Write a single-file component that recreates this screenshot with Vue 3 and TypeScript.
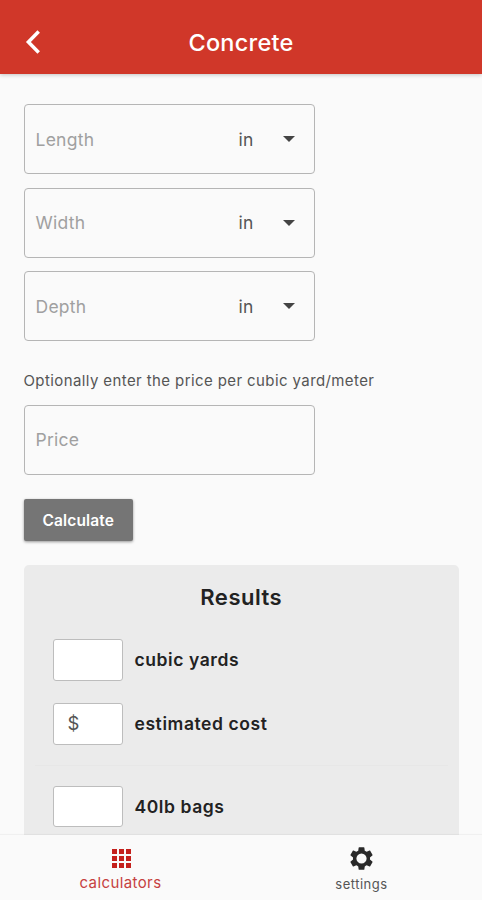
<script setup lang="ts">
import { ref } from 'vue'

interface Dimension {
  label: string
  unit: string
}

interface Result {
  prefix: string
  label: string
}

const dimensions = ref<Dimension[]>([
  { label: 'Length', unit: 'in' },
  { label: 'Width', unit: 'in' },
  { label: 'Depth', unit: 'in' },
])

const totals: Result[] = [
  { prefix: '', label: 'cubic yards' },
  { prefix: '$', label: 'estimated cost' },
]
const bags: Result[] = [{ prefix: '', label: '40lb bags' }]
const gridSteps = [0, 7, 14]
</script>

<template>
  <div class="screen">
    <header class="bar">
      <svg class="back" viewBox="0 0 16 24" aria-hidden="true">
        <path d="M13.7 1.6 3.4 12l10.3 10.4" />
      </svg>
      <h1 class="title">Concrete</h1>
    </header>

    <main class="content">
      <div class="fields">
        <div v-for="d in dimensions" :key="d.label" class="field">
          <span class="label">{{ d.label }}</span>
          <span class="unit">{{ d.unit }}</span>
          <svg class="caret" viewBox="0 0 12 6" aria-hidden="true"><path d="M0 0h12L6 6z" /></svg>
        </div>
      </div>

      <p class="hint">Optionally enter the price per cubic yard/meter</p>
      <div class="field"><span class="label">Price</span></div>

      <button class="calculate" type="button">Calculate</button>

      <section class="results">
        <h2 class="heading">Results</h2>
        <div class="group">
          <div v-for="r in totals" :key="r.label" class="row">
            <span class="box">{{ r.prefix }}</span>
            <span class="name">{{ r.label }}</span>
          </div>
        </div>
        <div class="divider"></div>
        <div class="group">
          <div v-for="r in bags" :key="r.label" class="row">
            <span class="box">{{ r.prefix }}</span>
            <span class="name">{{ r.label }}</span>
          </div>
        </div>
      </section>
    </main>

    <nav class="tabs">
      <div class="tab active">
        <svg class="grid-icon" viewBox="0 0 19 19" aria-hidden="true">
          <template v-for="y in gridSteps" :key="y">
            <rect v-for="x in gridSteps" :key="x" :x="x" :y="y" width="5" height="5" />
          </template>
        </svg>
        <span class="tab-label">calculators</span>
      </div>
      <div class="tab">
        <svg class="gear-icon" viewBox="1 1 22 22" aria-hidden="true">
          <path
            fill-rule="evenodd"
            d="M19.43 12.98c.04-.32.07-.64.07-.98s-.03-.66-.07-.98l2.11-1.65c.19-.15.24-.42.12-.64l-2-3.46c-.12-.22-.39-.3-.61-.22l-2.49 1c-.52-.4-1.08-.73-1.69-.98l-.38-2.65C14.46 2.18 14.25 2 14 2h-4c-.25 0-.46.18-.49.42l-.38 2.65c-.61.25-1.17.59-1.69.98l-2.49-1c-.23-.09-.49 0-.61.22l-2 3.46c-.13.22-.07.49.12.64l2.11 1.65c-.04.32-.07.65-.07.98s.03.66.07.98l-2.11 1.65c-.19.15-.24.42-.12.64l2 3.46c.12.22.39.3.61.22l2.49-1c.52.4 1.08.73 1.69.98l.38 2.65c.03.24.24.42.49.42h4c.25 0 .46-.18.49-.42l.38-2.65c.61-.25 1.17-.59 1.69-.98l2.49 1c.23.09.49 0 .61-.22l2-3.46c.12-.22.07-.49-.12-.64zM12 16.5a4.5 4.5 0 1 1 0-9 4.5 4.5 0 0 1 0 9z"
          />
        </svg>
        <span class="tab-label small">settings</span>
      </div>
    </nav>
  </div>
</template>

<style>
body {
  margin: 0;
  background: #fafafa;
}
</style>

<style scoped>
.screen {
  display: flex;
  flex-direction: column;
  height: 900px;
  overflow: hidden;
  background: #fafafa;
  color: #222;
  font-family: Inter, 'Liberation Sans', sans-serif;
}

.bar {
  display: grid;
  grid-template-columns: 48px 1fr 48px;
  align-items: center;
  flex: none;
  box-sizing: border-box;
  height: 74px;
  padding-top: 10px;
  background: #d03729;
  box-shadow: 0 1px 4px rgba(0, 0, 0, 0.22);
}

.back {
  width: 16px;
  height: 24px;
  margin-left: 25px;
  fill: none;
  stroke: #fff;
  stroke-width: 3.5;
}

.title {
  margin: 0;
  padding-top: 1px;
  color: #fff;
  font-size: 23.5px;
  font-weight: 500;
  letter-spacing: 0.25px;
  line-height: 28px;
  text-align: center;
}

.content {
  display: flex;
  flex-direction: column;
  align-items: flex-start;
  flex: 1;
  min-height: 0;
  padding: 30px 23px 0 23.5px;
  overflow: hidden;
}

.fields {
  display: flex;
  flex-direction: column;
  gap: 13.6px;
}

.field {
  display: flex;
  align-items: center;
  flex: none;
  box-sizing: border-box;
  width: 291.5px;
  height: 70px;
  padding: 0 19px 0 11px;
  border: 1.5px solid #b5b5b5;
  border-radius: 4px;
}

.label {
  flex: 1;
  color: #a0a0a0;
  font-size: 17.5px;
  letter-spacing: 0.25px;
}

.unit {
  margin-right: 29.5px;
  color: #555;
  font-size: 17.5px;
  letter-spacing: 0.2px;
}

.caret {
  width: 12px;
  height: 6px;
  fill: #444;
}

.hint {
  margin: 30px 0 13.5px;
  color: #555;
  font-size: 15px;
  letter-spacing: 0.4px;
  line-height: 20px;
  white-space: nowrap;
}

.calculate {
  flex: none;
  width: 109.5px;
  height: 42px;
  margin: 24.5px 0 24.3px;
  padding: 1px 0 0;
  border: 0;
  border-radius: 2px;
  background: #757575;
  box-shadow: 0 1px 3px rgba(0, 0, 0, 0.4);
  color: #fff;
  font: 600 15.5px/20px Inter, 'Liberation Sans', sans-serif;
  letter-spacing: 0.15px;
}

.results {
  flex: none;
  box-sizing: border-box;
  width: 100%;
  height: 330px;
  padding: 17.7px 11px 0;
  border-radius: 5px;
  background: #ebebeb;
}

.heading {
  margin: 0 0 28px;
  font-size: 22px;
  font-weight: 600;
  letter-spacing: 0.5px;
  line-height: 28px;
  text-align: center;
}

.group {
  display: flex;
  flex-direction: column;
  gap: 22.5px;
  padding-left: 18px;
}

.row {
  display: flex;
  align-items: center;
  gap: 11.5px;
}

.box {
  box-sizing: border-box;
  width: 70.5px;
  height: 41.5px;
  padding-left: 14px;
  border: 1.5px solid #bdbdbd;
  border-radius: 3px;
  background: #fff;
  color: #555;
  font-size: 18.5px;
  line-height: 39px;
}

.name {
  font-size: 17.5px;
  font-weight: 600;
  letter-spacing: 0.58px;
}

.divider {
  height: 1px;
  margin: 20px 0;
  background: #e7e7e7;
}

.tabs {
  display: grid;
  grid-template-columns: 1fr 1fr;
  flex: none;
  height: 65px;
  background: #fafafa;
  box-shadow: 0 -1px 1px rgba(0, 0, 0, 0.04);
}

.tab {
  display: flex;
  flex-direction: column;
  align-items: center;
  color: #555;
}

.active {
  color: #c64140;
}

.grid-icon {
  width: 19px;
  height: 19px;
  margin: 14px 0 5px 1px;
  fill: #c4201c;
}

.gear-icon {
  width: 25px;
  height: 25px;
  margin: 11px 0 4px;
  fill: #292929;
}

.tab-label {
  font-size: 15px;
  letter-spacing: 0.4px;
  line-height: 19px;
}

.small {
  font-size: 13px;
  letter-spacing: 0.5px;
}
</style>
